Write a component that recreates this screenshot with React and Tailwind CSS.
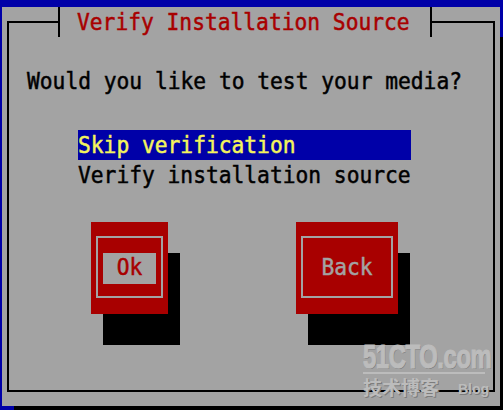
import React from 'react';

const mono = "font-['DejaVu_Sans_Mono',monospace] text-[21.26px] whitespace-pre";

function T({ children }) {
  return <span className="inline-block scale-y-110 [-webkit-text-stroke:0.45px_currentColor]">{children}</span>;
}

export default function App() {
  return (
    <div className={`relative flex h-[410px] w-[503px] flex-col overflow-hidden bg-[#0000a8] ${mono}`}>
      <div className="h-[7px]" />

      <div className="flex h-[399px]">
        <div className="w-[2px]" />

        {/* DIALOG PANEL */}
        <div className="flex w-[498px] bg-[#a3a3a3] px-[5px] py-[14px]">
          <div className="flex flex-1 flex-col border-2 border-black">
            {/* title, sits over the frame line */}
            <div className="ml-[49px] mt-[-16px] h-[30px] w-[374px] border-x-2 border-black bg-[#a3a3a3] pl-[17px] leading-[30px] text-[#a80000]">
              <T>Verify Installation Source</T>
            </div>

            <div className="mt-[29px] h-[30px] pl-[18px] leading-[30px] text-black">
              <T>Would you like to test your media?</T>
            </div>

            {/* LIST */}
            <div className="ml-[69px] mt-[34px] w-[333px]">
              <div className="h-[30px] bg-[#0000a8] leading-[30px] text-[#f4f45c]">
                <T>Skip verification</T>
              </div>
              <div className="h-[30px] leading-[30px] text-black">
                <T>Verify installation source</T>
              </div>
            </div>

            {/* BUTTONS */}
            <div className="mt-[32px] flex">
              <div className="ml-[82px] h-[92px] w-[77px] bg-[#a80000] px-[5px] pb-[16px] pt-[14px] shadow-[12px_31px_0_0_#000]">
                <div className="h-full border-2 border-[#a3a3a3] px-[5px] pt-[15px]">
                  <div className="h-[31px] bg-[#a3a3a3] text-center leading-[28px] text-[#a80000]">
                    <T>Ok</T>
                  </div>
                </div>
              </div>

              <div className="ml-[128px] h-[92px] w-[102px] bg-[#a80000] px-[5px] pb-[16px] pt-[14px] shadow-[12px_31px_0_0_#000]">
                <div className="h-full border-2 border-[#a3a3a3] pt-[15px]">
                  <div className="h-[31px] text-center leading-[28px] text-[#a3a3a3]">
                    <T>Back</T>
                  </div>
                </div>
              </div>
            </div>
          </div>
        </div>

        <div className="flex w-[3px] flex-col">
          <div className="h-[30px]" />
          <div className="flex-1 bg-black" />
        </div>
      </div>

      <div className="flex h-[4px]">
        <div className="w-[14px]" />
        <div className="flex-1 bg-black" />
      </div>

      {/* watermark */}
      <div className="absolute left-[363px] top-[342px] flex w-[126px] flex-col font-['Liberation_Sans',sans-serif] text-[#bcbcbc] [text-shadow:1px_1px_0_#7c7c7c]">
        <span className="inline-block h-[30px] origin-left scale-x-[0.72] text-[33px] font-bold leading-[30px] tracking-[-0.5px] [-webkit-text-stroke:1.2px_#bcbcbc]">51CTO.com</span>
        <div className="h-[2px] w-[122px] bg-[#bcbcbc]" />
        <div className="mt-[2px] flex items-end justify-between">
          <span className="font-['Noto_Sans_CJK_SC',sans-serif] text-[19px] font-bold leading-[22px]">技术博客</span>
          <span className="text-[14px] font-bold leading-[18px]">Blog</span>
        </div>
      </div>
    </div>
  );
}
